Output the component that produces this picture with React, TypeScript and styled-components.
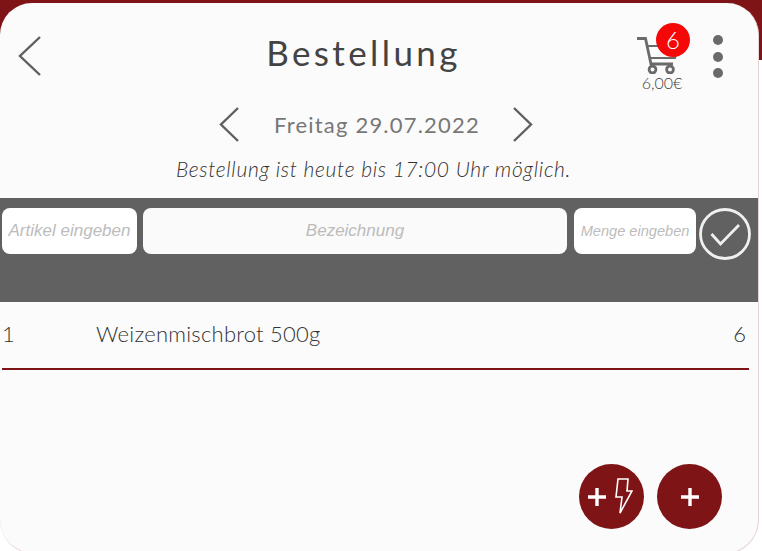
import styled, { createGlobalStyle } from "styled-components";

const GlobalStyle = createGlobalStyle`
  html, body {
    margin: 0;
    padding: 0;
    background: #ffffff;
  }
  * {
    box-sizing: border-box;
  }
`;

const Screen = styled.div`
  width: 762px;
  height: 551px;
  overflow: hidden;
  background: linear-gradient(#7f1416 0, #7f1416 60px, #ffffff 60px);
  font-family: "Lato", "Liberation Sans", sans-serif;
`;

const Card = styled.div`
  position: relative;
  width: 759px;
  height: 551px;
  margin-top: 3px;
  background: #fbfbfb;
  border-radius: 32px 32px 34px 34px;
  border-right: 1px solid #e9d2d3;
  border-bottom: 1px solid #e9d2d3;
`;

const Header = styled.header`
  height: 100px;
  padding: 33px 35px 0 18px;
  display: flex;
  align-items: flex-start;
`;

const BackButton = styled.div`
  width: 24px;
  height: 40px;
  color: #5f5f5f;
`;

const Title = styled.h1`
  flex: 1;
  margin: -6px 0 0 0;
  padding-left: 53px;
  text-align: center;
  font-size: 35px;
  line-height: 44px;
  font-weight: 400;
  letter-spacing: 3.4px;
  color: #434343;
`;

const Cart = styled.div`
  position: relative;
  width: 54px;
  margin: 1px 27px 0 0;
  display: flex;
  flex-direction: column;
  align-items: center;
  color: #6a6a6a;
`;

const CartBadge = styled.span`
  position: absolute;
  top: -14px;
  left: 24px;
  width: 34px;
  height: 34px;
  border-radius: 50%;
  background: #f40808;
  color: #fff;
  font-size: 24px;
  font-weight: 300;
  line-height: 34px;
  text-align: center;
`;

const CartTotal = styled.span`
  margin: 0 0 0 6px;
  font-size: 16px;
  line-height: 18px;
  font-weight: 300;
  color: #3f3f3f;
`;

const MenuDots = styled.div`
  margin-top: -1px;
  display: flex;
  flex-direction: column;
  gap: 6.5px;
`;

const Dot = styled.span`
  width: 10px;
  height: 10px;
  border-radius: 50%;
  background: #6a6a6a;
`;

const DateRow = styled.div`
  height: 42px;
  padding-right: 6px;
  display: flex;
  align-items: center;
  justify-content: center;
  gap: 35px;
  color: #5f5f5f;
`;

const DateText = styled.span`
  width: 204px;
  text-align: center;
  white-space: nowrap;
  font-size: 22px;
  letter-spacing: 1.2px;
  color: #777777;
`;

const Notice = styled.p`
  margin: 6px 0 0 0;
  height: 47px;
  padding-right: 11px;
  text-align: center;
  font-size: 21px;
  line-height: 36px;
  font-style: italic;
  font-weight: 300;
  letter-spacing: 0.67px;
  color: #333333;
`;

const InputBar = styled.div`
  height: 104px;
  padding: 10px 0 0 2px;
  display: flex;
  align-items: flex-start;
  background: #616161;
`;

const Field = styled.div<{ $width: number; $size: number; $fill: string; $gap: number }>`
  width: ${(p) => p.$width}px;
  height: 46px;
  flex: none;
  margin-right: ${(p) => p.$gap}px;
  border-radius: 8px;
  background: ${(p) => p.$fill};
  display: flex;
  align-items: center;
  justify-content: center;
  font-family: "Liberation Sans", Arial, sans-serif;
  font-style: italic;
  font-size: ${(p) => p.$size}px;
  color: #bcbcbc;
  white-space: nowrap;
`;

const ConfirmButton = styled.div`
  width: 52px;
  height: 52px;
  flex: none;
`;

const OrderRow = styled.div`
  height: 68px;
  margin: 0 9px 0 2px;
  padding: 0 3px 4px 0;
  display: flex;
  align-items: center;
  border-bottom: 2px solid #7f1416;
  font-size: 22px;
  font-weight: 300;
  color: #333333;
`;

const RowNumber = styled.span`
  width: 94px;
`;

const RowName = styled.span`
  flex: 1;
  letter-spacing: 0.25px;
`;

const FabGroup = styled.div`
  position: absolute;
  top: 461px;
  left: 579px;
  display: flex;
  gap: 13px;
`;

const Fab = styled.div<{ $gap?: number; $shift?: number }>`
  width: 65px;
  height: 65px;
  padding-right: ${(p) => p.$shift ?? 0}px;
  border-radius: 50%;
  background: #7f1416;
  display: flex;
  align-items: center;
  justify-content: center;
  gap: ${(p) => p.$gap ?? 0}px;
`;

const Chevron = ({ dir, w, h }: { dir: "left" | "right"; w: number; h: number }) => (
  <svg width={w} height={h} viewBox={`0 0 ${w} ${h}`} fill="none" stroke="currentColor" strokeWidth="2.4">
    {dir === "left" ? (
      <path d={`M${w - 1} 1 L2 ${h / 2} L${w - 1} ${h - 1}`} />
    ) : (
      <path d={`M1 1 L${w - 2} ${h / 2} L1 ${h - 1}`} />
    )}
  </svg>
);

const CartIcon = () => (
  <svg width="44" height="37" viewBox="0 0 44 37" fill="none" stroke="currentColor" strokeWidth="2.8">
    <path d="M0 1.5 H8.5 L14 27 H36" />
    <path d="M10 9 H41 L38 21 H12.5" strokeWidth="2.2" />
    <circle cx="15.5" cy="32.5" r="3.4" />
    <circle cx="33" cy="32.5" r="3.4" />
  </svg>
);

const CheckIcon = () => (
  <svg width="52" height="52" viewBox="0 0 52 52" fill="none" stroke="#f0f0f0" strokeWidth="2.8">
    <circle cx="26" cy="26" r="24.5" />
    <path d="M12.5 26 L21.5 36 L40 17" />
  </svg>
);

const PlusIcon = () => (
  <svg width="20" height="20" viewBox="0 0 20 20" fill="none" stroke="#ffffff" strokeWidth="3.4">
    <path d="M10 1 V19 M1 10 H19" />
  </svg>
);

const BoltIcon = () => (
  <svg width="18" height="37" viewBox="0 0 18 37" fill="none" stroke="#ffffff" strokeWidth="1.6">
    <path d="M3 1 H13 L12 13 H17 L5 35 L7 19 H1 Z" />
  </svg>
);

export default function App() {
  return (
    <>
      <GlobalStyle />
      <Screen>
        <Card>
          <Header>
            <BackButton>
              <Chevron dir="left" w={23} h={40} />
            </BackButton>
            <Title>Bestellung</Title>
            <Cart>
              <CartIcon />
              <CartBadge>6</CartBadge>
              <CartTotal>6,00€</CartTotal>
            </Cart>
            <MenuDots>
              <Dot />
              <Dot />
              <Dot />
            </MenuDots>
          </Header>
          <DateRow>
            <Chevron dir="left" w={20} h={35} />
            <DateText>Freitag 29.07.2022</DateText>
            <Chevron dir="right" w={20} h={35} />
          </DateRow>
          <Notice>Bestellung ist heute bis 17:00 Uhr möglich.</Notice>
          <InputBar>
            <Field $width={135} $size={17} $gap={6} $fill="#ffffff">Artikel eingeben</Field>
            <Field $width={424} $size={17} $gap={7} $fill="#fafafa">Bezeichnung</Field>
            <Field $width={122} $size={14.6} $gap={3} $fill="#ffffff">Menge eingeben</Field>
            <ConfirmButton>
              <CheckIcon />
            </ConfirmButton>
          </InputBar>
          <OrderRow>
            <RowNumber>1</RowNumber>
            <RowName>Weizenmischbrot 500g</RowName>
            <span>6</span>
          </OrderRow>
          <FabGroup>
            <Fab $gap={8} $shift={4}>
              <PlusIcon />
              <BoltIcon />
            </Fab>
            <Fab>
              <PlusIcon />
            </Fab>
          </FabGroup>
        </Card>
      </Screen>
    </>
  );
}
